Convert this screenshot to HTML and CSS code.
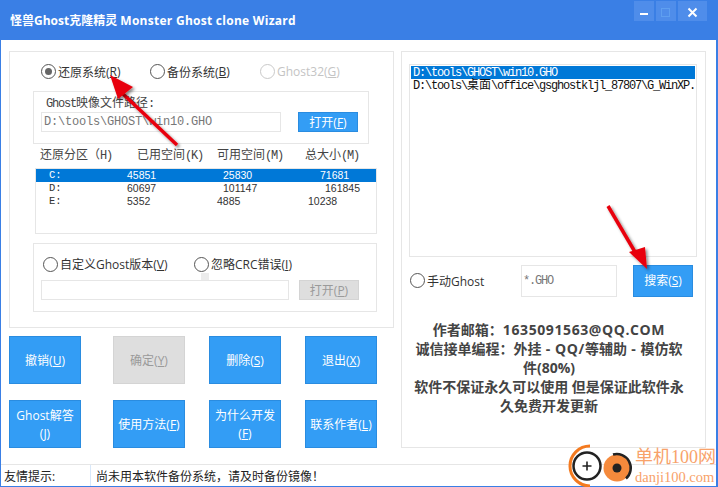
FILE: index.html
```html
<!DOCTYPE html>
<html lang="zh-CN">
<head>
<meta charset="utf-8">
<title>Monster Ghost clone Wizard</title>
<link rel="stylesheet" href="styles.css">
</head>
<body>
<div class="window">
  <header class="titlebar">
    <div class="title">怪兽Ghost克隆精灵 <span class="title-en">Monster Ghost clone Wizard</span></div>
    <div class="controls">
      <div class="ctl"><svg width="20" height="20" viewBox="0 0 20 20"><rect x="6" y="12" width="8" height="2" fill="#fff"/></svg></div>
      <div class="ctl"><svg width="20" height="20" viewBox="0 0 20 20"><rect x="5.5" y="7.5" width="8" height="8" fill="none" stroke="#5f9ff0"/></svg></div>
      <div class="ctl ctl-close"><svg width="20" height="20" viewBox="0 0 20 20"><path d="M5.5 7.5l8 8M13.5 7.5l-8 8" stroke="#fff" stroke-width="2" fill="none"/></svg></div>
    </div>
  </header>
  <main class="body">
    <div class="col-left">
      <section class="panel left-panel">
        <div class="radios">
          <label class="radio r1"><i class="dot on"></i>还原系统(<u>R</u>)</label>
          <label class="radio r2"><i class="dot"></i>备份系统(<u>B</u>)</label>
          <label class="radio dis"><i class="dot"></i>Ghost32(<u>G</u>)</label>
        </div>
        <div class="group path-group">
          <div class="path-label mono"><span class="lat">Ghost</span>映像文件路径<span class="lat">:</span></div>
          <div class="path-row">
            <div class="field mono path-field">D:\tools\GHOST\win10.GHO</div>
            <div class="btn btn-small"><span>打开(<u>F</u>)</span></div>
          </div>
        </div>
        <div class="heads mono">
          <span class="h1">还原分区（<span class="lat">H)</span></span><span class="h2">已用空间<span class="lat">(K)</span></span><span class="h3">可用空间<span class="lat">(M)</span></span><span class="h4">总大小<span class="lat">(M)</span></span>
        </div>
        <div class="parts">
          <div class="part sel"><span class="p1 mono">C:</span><span class="p2">45851</span><span class="p3">25830</span><span class="p4">71681</span></div>
          <div class="part"><span class="p1 mono">D:</span><span class="p2">60697</span><span class="p3">101147</span><span class="p4 far">161845</span></div>
          <div class="part"><span class="p1 mono">E:</span><span class="p2">5352</span><span class="p3 near">4885</span><span class="p4">10238</span></div>
        </div>
        <div class="group custom-group">
          <div class="radios2">
            <label class="radio r3"><i class="dot"></i>自定义Ghost版本(<u>V</u>)</label>
            <label class="radio"><i class="dot"></i>忽略CRC错误(<u>I</u>)</label>
          </div>
          <div class="path-row custom-row">
            <div class="field custom-field"></div>
            <div class="btn btn-small btn-off"><span>打开(<u>P</u>)</span></div>
          </div>
          <i class="speck"></i>
        </div>
      </section>
      <div class="actions">
        <div class="btn"><span>撤销(<u>U</u>)</span></div>
        <div class="btn btn-off"><span>确定(<u>Y</u>)</span></div>
        <div class="btn"><span>删除(<u>S</u>)</span></div>
        <div class="btn"><span>退出(<u>X</u>)</span></div>
        <div class="btn"><span>Ghost解答<br>(<u>J</u>)</span></div>
        <div class="btn"><span>使用方法(<u>F</u>)</span></div>
        <div class="btn"><span>为什么开发<br>(<u>F</u>)</span></div>
        <div class="btn"><span>联系作者(<u>L</u>)</span></div>
      </div>
    </div>
    <section class="panel right-panel">
      <div class="files mono">
        <div class="file sel">D:\tools\GHOST\win10.GHO</div>
        <div class="file">D:\tools\<span class="cjk">桌面</span>\office\gsghostkljl_87807\G_WinXP.</div>
      </div>
      <div class="search-row">
        <label class="radio manual"><i class="dot"></i>手动Ghost</label>
        <div class="field mono mask">*.GHO</div>
        <div class="btn search"><span>搜索(<u>S</u>)</span></div>
      </div>
      <div class="about">作者邮箱：<span class="wide">1635091563@QQ.COM</span><br>诚信接单编程：外挂<span class="wide"> - QQ/</span>等辅助<span class="wide"> - </span>模仿软件(80%)<br>软件不保证永久可以使用 但是保证此软件永久免费开发更新</div>
    </section>
  </main>
  <footer class="status">
    <div class="status-a">友情提示:</div>
    <div class="status-b">尚未用本软件备份系统，请及时备份镜像！</div>
  </footer>
</div>

<svg class="overlay arrow-a" width="120" height="120" viewBox="0 0 120 120">
  <defs><filter id="sh" x="-30%" y="-30%" width="160%" height="160%"><feDropShadow dx="2" dy="2" stdDeviation="1.5" flood-color="#000" flood-opacity=".45"/></filter></defs>
  <path d="M177 145 L122 93" transform="translate(-110 -69)" stroke="#e8000b" stroke-width="3.5" fill="none" filter="url(#sh)"/>
  <path d="M110 75 L133 87 L118 99 Z" transform="translate(-110 -69)" fill="#e8000b" filter="url(#sh)"/>
</svg>
<svg class="overlay arrow-b" width="70" height="90" viewBox="0 0 70 90">
  <path d="M608 206 L635 252" transform="translate(-600 -200)" stroke="#e8000b" stroke-width="3.5" fill="none" filter="url(#sh)"/>
  <path d="M647 269 L629 252 L645 247 Z" transform="translate(-600 -200)" fill="#e8000b" filter="url(#sh)"/>
</svg>
<div class="overlay mark">
  <svg width="66" height="44" viewBox="0 0 66 44">
    <path d="M22 2 A20 20 0 0 0 22 42" stroke="#f47a1f" stroke-width="3" fill="none"/>
    <circle cx="19" cy="22" r="13.5" fill="#fff" stroke="#222" stroke-width="2.5"/>
    <path d="M14.5 22h9M19 17.500v9" stroke="#222" stroke-width="1.6"/>
    <circle cx="49" cy="24" r="13.500" fill="#f58a3c"/>
    <path d="M45 10.500 A14 14 0 0 1 58 34.500" stroke="#222" stroke-width="2.500" fill="none"/>
    <circle cx="49" cy="24" r="4.500" fill="#222"/>
  </svg>
  <div class="mark-text"><div class="mark-cn">单机100网</div><div class="mark-en">danji100.com</div></div>
</div>
</body>
</html>
```
FILE: styles.css
```css
* { box-sizing: border-box; }
html, body { margin: 0; padding: 0; }
body {
  width: 718px; height: 487px; overflow: hidden; position: relative;
  font-family: "Open Sans", "Noto Sans CJK SC", sans-serif;
  font-size: 12px; color: #333; background: #fff;
}
u { text-decoration: underline; text-underline-offset: 1px; }
.mono { font-family: "Liberation Mono", "Noto Sans CJK SC", monospace; }
.lat { letter-spacing: -1.2px; }
.window {
  width: 718px; height: 487px; display: flex; flex-direction: column;
  border: 1px solid #3a7fe5; border-top: 0; border-right-width: 2px;
}
.titlebar {
  height: 40px; flex: none; background: #3a7fe5; color: #fff; margin: 0 -2px 0 -1px;
  display: flex; justify-content: space-between; padding: 1px 11px 0 10px;
}
.title { font-size: 12px; font-weight: 700; line-height: 39px; }
.title-en { letter-spacing: .27px; }
.controls { display: flex; gap: 2px; height: 20px; }
.ctl { width: 20px; height: 20px; background: #4f8dea; }
.ctl-close { width: 29px; padding-left: 5px; }
.body { flex: 1; display: flex; align-items: flex-start; padding: 11px 0 0 8px; gap: 7px; min-height: 0; }
.panel { border: 1px solid #e6e6e6; }
.col-left { width: 385px; flex: none; }
.left-panel { width: 385px; height: 277px; padding: 0 0 0 23px; }
.radios { display: flex; height: 39px; align-items: center; padding: 0 0 0 8px; }
.radio { display: inline-flex; align-items: center; color: #333; font-size: 12px; white-space: nowrap; }
.dot {
  width: 15px; height: 15px; border-radius: 50%; border: 1px solid #555; background: #fff;
  margin-right: 2px; position: relative; flex: none;
}
.dot.on::after {
  content: ""; position: absolute; left: 3px; top: 3px; width: 7px; height: 7px;
  border-radius: 50%; background: #666;
}
.r1 { width: 109px; }
.r2 { width: 110px; }
.dis { color: #c4c4c4; }
.dis .dot { border-color: #c9c9c9; }
.group { border: 1px solid #e6e6e6; position: relative; }
.path-group { width: 336px; height: 53px; padding: 4px 7px 0; }
.path-label { font-size: 12px; line-height: 16px; height: 16px; padding-left: 5px; color: #444; }
.path-row { display: flex; }
.field { border: 1px solid #e6e6e6; background: #fff; color: #777; }
.path-field { width: 240px; height: 20px; line-height: 18px; font-size: 12px; padding-left: 2px; letter-spacing: -.2px; }
.btn {
  background: #339df5; border: 1px solid #2a8ce0; color: #fff; display: flex; align-items: center;
  justify-content: center; text-align: center; font-size: 12px; line-height: 18px; padding-top: 1px;
}
.btn-small { width: 60px; height: 20px; margin-left: 17px; flex: none; }
.btn-off { background: #dedede; border-color: #d4d4d4; color: #9a9a9a; }
.heads { height: 24px; line-height: 24px; font-size: 12px; display: flex; color: #444; }
.h1 { width: 104px; padding-left: 7px; }
.h2 { width: 80px; }
.h3 { width: 88px; }
.h4 { width: 70px; }
.parts { width: 342px; height: 66px; border: 1px solid #e6e6e6; margin-left: 2px; font-family: "Liberation Sans", sans-serif; font-size: 10.5px; color: #333; }
.part { display: flex; height: 13px; line-height: 13px; }
.part.sel { background: #0078d7; color: #fff; }
.p1 { width: 91px; padding-left: 13px; }
.p2 { width: 96px; }
.p3 { width: 97px; }
.p3.near { width: 91px; margin-left: -6px; }
.p4.far { margin-left: 5px; }
.custom-group { width: 344px; height: 69px; margin-top: 9px; padding: 8px 7px 0; }
.radios2 { display: flex; height: 24px; align-items: center; padding-left: 2px; }
.r3 { width: 151px; }
.custom-row { margin-top: 4px; }
.custom-field { width: 248px; height: 20px; }
.custom-row .btn-small { margin-left: 10px; }
.speck { position: absolute; left: 167px; top: 29px; width: 8px; height: 7px; background: #ececec; }
.actions {
  display: grid; grid-template-columns: 104px 96px 96px 72px; grid-auto-rows: 48px;
  row-gap: 16px; margin-top: 8px;
}
.actions .btn { width: 72px; }
.right-panel { width: 305px; height: 397px; padding: 12px 8px 0 7px; flex: none; }
.files { width: 288px; height: 193px; border: 1px solid #e6e6e6; padding: 1px; font-size: 12px; color: #111; overflow: hidden; }
.file { height: 13px; line-height: 14px; padding-left: 2px; white-space: nowrap; letter-spacing: -1.2px; }
.file.sel { background: #0078d7; color: #fff; }
.cjk { letter-spacing: 0; }
.search-row { display: flex; align-items: center; margin-top: 7px; height: 33px; padding-left: 1px; }
.manual { width: 111px; }
.mask { width: 96px; height: 32px; line-height: 30px; padding-left: 1px; font-size: 12px; letter-spacing: -1.2px; }
.search { width: 60px; height: 32px; margin-left: 16px; }
.about { width: 276px; margin: 23px 0 0 2px; font-size: 14px; font-weight: 700; color: #444; line-height: 19px; text-align: center; }
.wide { letter-spacing: .6px; }
.status { height: 22px; flex: none; border-top: 1px solid #e6e6e6; display: flex; margin-top: auto; line-height: 23px; font-size: 12px; color: #222; }
.status-a { width: 90px; padding-left: 3px; border-right: 1px solid #d8e8fa; }
.status-b { padding-left: 5px; }
.overlay { position: absolute; }
.arrow-a { left: 110px; top: 69px; }
.arrow-b { left: 600px; top: 200px; }
.mark { left: 568px; top: 444px; display: flex; width: 150px; }
.mark-text { margin-left: 1px; color: #f8a26a; }
.mark-cn { font-size: 18px; line-height: 20px; white-space: nowrap; font-family: "Liberation Serif", "Noto Sans CJK SC", serif; margin-top: 3px; }
.mark-en { font-size: 14.5px; line-height: 17px; white-space: nowrap; font-family: "Liberation Serif", serif; margin-top: 2px; }
```
